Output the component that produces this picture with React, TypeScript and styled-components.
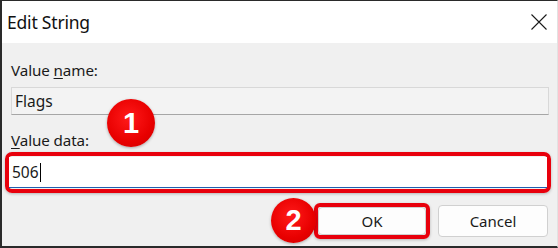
import styled, { createGlobalStyle } from "styled-components";

const GlobalStyle = createGlobalStyle`
  html, body {
    margin: 0;
    padding: 0;
    background: #f0f0f0;
  }
  * {
    box-sizing: border-box;
  }
`;

const Window = styled.div`
  position: relative;
  width: 558px;
  height: 248px;
  background: #f0f0f0;
  border-left: 2px solid #2a2a2a;
  border-top: 1px solid #2a2a2a;
  border-bottom: 2px solid #2a2a2a;
  border-right: 1px solid #e2e2e2;
  font-family: "Noto Sans", "Open Sans", sans-serif;
  color: #1a1a1a;
  overflow: hidden;
`;

const TitleBar = styled.div`
  height: 42px;
  background: #ffffff;
  display: flex;
  align-items: center;
  justify-content: space-between;
  padding: 0 10px 0 5px;
`;

const Title = styled.div`
  font-size: 17.5px;
  letter-spacing: -0.2px;
  color: #111;
`;

const Body = styled.div`
  display: flex;
  flex-direction: column;
  padding: 0 6px 0 3px;
`;

const Label = styled.div<{ $top: number }>`
  margin-top: ${({ $top }) => $top}px;
  padding-left: 6px;
  font-size: 15.2px;
  line-height: 20px;
  letter-spacing: -0.1px;
  color: #1a1a1a;

  u {
    text-decoration-thickness: 1px;
    text-underline-offset: 2px;
  }
`;

const ReadonlyField = styled.div`
  margin: 7px 2px 0 6px;
  height: 28px;
  background: #f3f3f3;
  border: 1px solid #d8d8d8;
  border-bottom-color: #a6a6a6;
  display: flex;
  align-items: center;
  padding-left: 3px;
  font-size: 15.5px;
`;

const Highlight = styled.div`
  border: 4px solid #e8000c;
  border-radius: 7px;
  box-shadow: 0 1px 3px rgba(0, 0, 0, 0.25);
`;

const DataHighlight = styled(Highlight)`
  margin-top: 2px;
  height: 41px;
  padding: 1px 0;
`;

const DataField = styled.div`
  height: 100%;
  background: #ffffff;
  border-bottom: 1px solid #1f5fb0;
  display: flex;
  align-items: center;
  padding-left: 3px;
  font-size: 15.5px;
  line-height: 18px;
`;

const Caret = styled.span`
  display: inline-block;
  width: 1px;
  height: 19px;
  margin-left: 1px;
  background: #000;
`;

const ButtonRow = styled.div`
  display: flex;
  justify-content: flex-end;
  align-items: center;
  gap: 8px;
  margin-top: 10px;
  padding-right: 3px;
`;

const Button = styled.div<{ $width: number; $height: number }>`
  width: ${({ $width }) => $width}px;
  height: ${({ $height }) => $height}px;
  background: #fdfdfd;
  border: 1px solid #d0d0d0;
  border-radius: 4px;
  display: flex;
  align-items: center;
  justify-content: center;
  font-size: 15px;
  color: #1a1a1a;
`;

const OkHighlight = styled(Highlight)`
  border-radius: 6px;
  display: flex;
`;

const Badge = styled.div<{ $x: number; $y: number; $size: number }>`
  position: absolute;
  left: ${({ $x }) => $x}px;
  top: ${({ $y }) => $y}px;
  width: ${({ $size }) => $size}px;
  height: ${({ $size }) => $size}px;
  border-radius: 50%;
  background: radial-gradient(circle at 45% 40%, #ff1a1a 0%, #e80000 60%, #cc0000 100%);
  box-shadow: 0 1px 3px rgba(0, 0, 0, 0.3);
  display: flex;
  align-items: center;
  justify-content: center;
  color: #ffffff;
  font-family: "Liberation Sans", Arial, sans-serif;
  font-size: 29px;
  font-weight: 700;
`;

const CloseIcon = () => (
  <svg width="16" height="16" viewBox="0 0 16 16" fill="none">
    <path d="M0.5 0.5 L15.5 15.5 M15.5 0.5 L0.5 15.5" stroke="#1a1a1a" strokeWidth="1.1" />
  </svg>
);

export default function App() {
  return (
    <>
      <GlobalStyle />
      <Window>
        <TitleBar>
          <Title>Edit String</Title>
          <CloseIcon />
        </TitleBar>
        <Body>
          <Label $top={17}>
            Value <u>n</u>ame:
          </Label>
          <ReadonlyField>Flags</ReadonlyField>
          <Label $top={15}>
            <u>V</u>alue data:
          </Label>
          <DataHighlight>
            <DataField>
              506
              <Caret />
            </DataField>
          </DataHighlight>
          <ButtonRow>
            <OkHighlight>
              <Button $width={108} $height={28}>
                OK
              </Button>
            </OkHighlight>
            <Button $width={110} $height={32}>
              Cancel
            </Button>
          </ButtonRow>
        </Body>
        <Badge $x={105} $y={98} $size={48}>
          1
        </Badge>
        <Badge $x={269} $y={197} $size={45}>
          2
        </Badge>
      </Window>
    </>
  );
}
